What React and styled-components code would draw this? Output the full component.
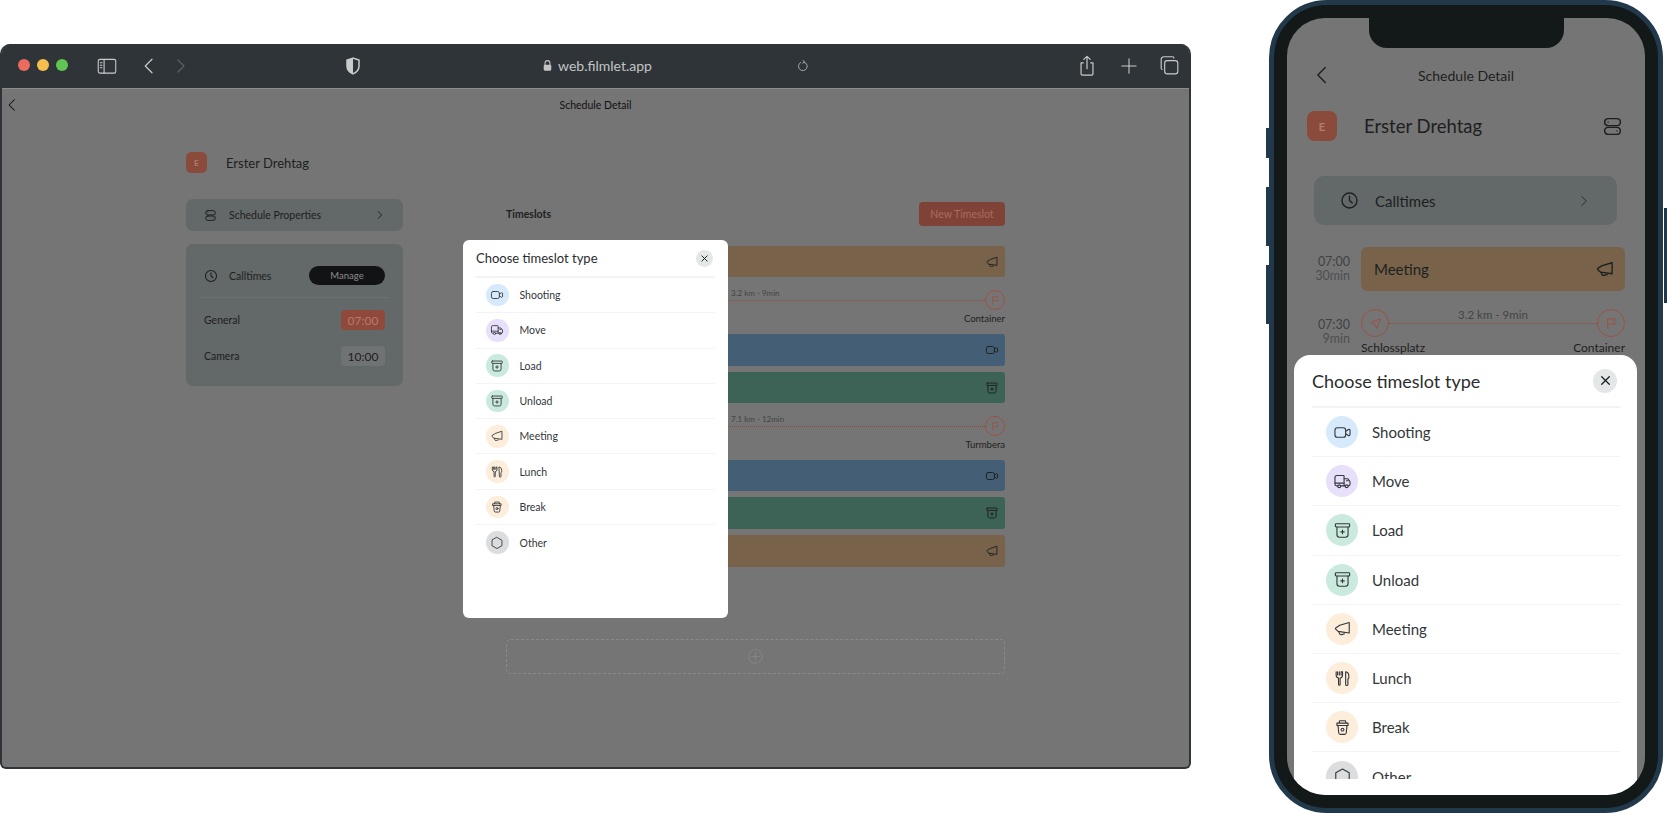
import React from 'react';
import styled, { createGlobalStyle } from 'styled-components';

const GlobalStyle = createGlobalStyle`
    html, body {
        margin: 0;
        background: #fff;
        font-family: "Lato", "Noto Sans", sans-serif;
        color: #1d1f20;
    }
`;

const Page = styled.div`
    display: flex;
    align-items: flex-start;
    width: 1667px;
    height: 813px;
    overflow: hidden;
    background: #fff;
`;

// icons
const Svg = ({ size = 24, stroke = 1.6, color = 'currentColor', children }) => (
    <svg width={size} height={size} viewBox="0 0 24 24" fill="none" stroke={color} strokeWidth={stroke} strokeLinecap="round" strokeLinejoin="round" style={{ display: 'block', flexShrink: 0 }}>
        {children}
    </svg>
);
const VideoIcon = (p) => (
    <Svg {...p}>
        <rect x="2.5" y="6" width="13.5" height="12" rx="3" />
        <path d="M16 10.5l3.4-2.2c.9-.6 2.1 0 2.1 1.1v5.2c0 1.1-1.2 1.7-2.1 1.1L16 13.5" />
    </Svg>
);
const TruckIcon = (p) => (
    <Svg {...p}>
        <path d="M6 17.5H4.5a2 2 0 0 1-2-2V6.5a2 2 0 0 1 2-2H13a1 1 0 0 1 1 1v12H9.5" />
        <path d="M14 8.5h4.5l3 3.5v3.5a2 2 0 0 1-2 2H19M15.5 17.5H14M2.5 14h11.5M17 11h2" />
        <circle cx="7.8" cy="18" r="1.8" />
        <circle cx="17.3" cy="18" r="1.8" />
    </Svg>
);
const BoxIcon = (p) => (
    <Svg {...p}>
        <rect x="3" y="3.5" width="18" height="4" rx="1" />
        <path d="M5 7.5v10a3 3 0 0 0 3 3h8a3 3 0 0 0 3-3v-10" />
        <path d="M12 11.5v4.5M9.8 13.8h4.4" />
    </Svg>
);
const MegaphoneIcon = (p) => (
    <Svg {...p}>
        <path d="M20.5 4.5v13.2L8.5 16H6.8L3.4 12.8a1 1 0 0 1 0-1.5L8.5 8z" />
        <path d="M7.5 16l.6 2.2a2.2 2.2 0 0 0 2.7 1.5l3.7-1" />
    </Svg>
);
const CutleryIcon = (p) => (
    <Svg {...p}>
        <path d="M4 3.5v4.5a3.5 3.5 0 0 0 3 3.4v8.1a1 1 0 0 0 2 0v-8.1a3.5 3.5 0 0 0 3-3.4V3.5l-1.8 0v4M8 3.5v4M5.8 3.5v4" />
        <path d="M16 3.5c2.8.6 4 2.6 4 5.5v2c0 .8-.5 1.5-1.2 1.5v7a1.4 1.4 0 0 1-2.8 0z" />
    </Svg>
);
const CupIcon = (p) => (
    <Svg {...p}>
        <path d="M5 6.5h14v3H5zM7.5 6.5l.8-3h7.4l.8 3" />
        <path d="M6.3 9.5l1 9.5a2 2 0 0 0 2 1.7h5.4a2 2 0 0 0 2-1.7l1-9.5" />
        <circle cx="12" cy="14.7" r="1.8" />
    </Svg>
);
const HexIcon = (p) => (
    <Svg {...p}>
        <path d="M12 2.5l8.5 4.8v9.4L12 21.5l-8.5-4.8V7.300z" />
    </Svg>
);
const FlagIcon = (p) => (
    <Svg {...p}>
        <path d="M7 20V5.500h11l-1.500 4 1.500 4H7" />
    </Svg>
);
const PlaneIcon = (p) => (
    <Svg {...p}>
        <path d="M19.500 4.500L4.500 10.500l6.500 2.500 2.500 6.500z" />
    </Svg>
);
const ClockIcon = (p) => (
    <Svg {...p}>
        <circle cx="12" cy="12" r="9.500" />
        <path d="M12 6.500V12l3.500 3" />
    </Svg>
);
const TogglesIcon = (p) => (
    <Svg {...p}>
        <rect x="3" y="3" width="18" height="8" rx="4" />
        <rect x="3" y="13" width="18" height="8" rx="4" />
        <path d="M7 7h.01M17 17h.01" />
    </Svg>
);
const ChevronLeft = (p) => (
    <Svg {...p}>
        <path d="M16 3L7 12l9 9" />
    </Svg>
);
const ChevronRight = (p) => (
    <Svg {...p}>
        <path d="M8 4l8 8-8 8" />
    </Svg>
);
const CloseIcon = (p) => (
    <Svg {...p}>
        <path d="M5 5l14 14M19 5L5 19" />
    </Svg>
);
const PlusCircle = (p) => (
    <Svg {...p}>
        <circle cx="12" cy="12" r="11" />
        <path d="M12 6v12M6 12h12" />
    </Svg>
);
const SidebarIcon = (p) => (
    <Svg {...p}>
        <rect x="1.500" y="4" width="21" height="16.500" rx="2" />
        <path d="M8.500 4v16.500M4 8h2M4 11h2M4 14h2" />
    </Svg>
);
const ShieldIcon = ({ size }) => (
    <svg width={size} height={size} viewBox="0 0 24 24" style={{ display: 'block' }}>
        <path d="M12 1.500L4 4v8c0 5 3.500 8.500 8 10.500 4.500-2 8-5.500 8-10.500V4z" fill="none" stroke="#c9cccd" strokeWidth="2" />
        <path d="M12 1.500L4 4v8c0 5 3.500 8.500 8 10.500z" fill="#c9cccd" />
    </svg>
);
const LockIcon = ({ size }) => (
    <svg width={size} height={size} viewBox="0 0 24 24" style={{ display: 'block' }}>
        <path d="M7.500 11V7.500a4.500 4.500 0 0 1 9 0V11" fill="none" stroke="#c2c4c5" strokeWidth="2" />
        <rect x="5" y="10.500" width="14" height="11" rx="2" fill="#c2c4c5" />
    </svg>
);
const ReloadIcon = (p) => (
    <Svg {...p}>
        <path d="M14 5.200a7.500 7.500 0 1 1-6 .6M12 2.500l2.500 2.800-3 2" />
    </Svg>
);
const ShareIcon = (p) => (
    <Svg {...p}>
        <path d="M8 8.500H5.500v12a1.500 1.500 0 0 0 1.500 1.500h10a1.500 1.500 0 0 0 1.500-1.500v-12H16M12 15V1.500M8.500 4.800L12 1.500l3.500 3.300" />
    </Svg>
);
const PlusIcon = (p) => (
    <Svg {...p}>
        <path d="M12 2.500v19M2.500 12h19" />
    </Svg>
);
const TabsIcon = (p) => (
    <Svg {...p}>
        <rect x="6.500" y="6.500" width="15" height="15" rx="3" />
        <path d="M3.500 16.500a1.500 1.500 0 0 1-1-1.500V5a3 3 0 0 1 3-3h10a1.500 1.500 0 0 1 1.500 1.500" />
    </Svg>
);

// browser window
const Browser = styled.div`
    position: relative;
    flex-shrink: 0;
    width: 1191px;
    height: 725px;
    margin-top: 44px;
    box-sizing: border-box;
    border: 2px solid #2f3438;
    border-top: 0;
    border-radius: 10px 10px 6px 6px;
    background: #757575;
    overflow: hidden;
`;

const Toolbar = styled.div`
    display: flex;
    align-items: center;
    height: 45px;
    margin: 0 -2px;
    padding-left: 18px;
    padding-bottom: 1px;
    box-sizing: border-box;
    background: #2f3438;
    border-bottom: 1px solid #8b8d8e;
`;

const Lights = styled.div`
    display: flex;
    gap: 7px;
    margin-top: -2px;
`;

const Light = styled.span`
    width: 12px;
    height: 12px;
    border-radius: 50%;
    background: ${(p) => p.$color};
`;

const ToolIcon = styled.span`
    display: block;
    margin-left: ${(p) => p.$left}px;
    color: ${(p) => p.$color || '#c9cccd'};
`;

const Url = styled.span`
    margin-left: 4px;
    font-size: 14px;
    color: #c2c4c5;
`;

const NavBar = styled.div`
    display: grid;
    grid-template-columns: 1fr auto 1fr;
    align-items: center;
    height: 32px;
    padding: 0 5px;
    margin: 0 -2px;
    font-size: 10.500px;
    color: #111;
`;

const DeskColumns = styled.div`
    display: flex;
    margin-top: 31px;
    padding-left: 184px;
`;

const DeskLeft = styled.div`
    display: flex;
    flex-direction: column;
    width: 217px;
`;

const NameRow = styled.div`
    display: flex;
    align-items: center;
    gap: ${(p) => p.$gap}px;
`;

const Badge = styled.div`
    display: flex;
    align-items: center;
    justify-content: center;
    width: ${(p) => p.$size}px;
    height: ${(p) => p.$size}px;
    border-radius: ${(p) => p.$size / 4}px;
    background: #8a4a3c;
    color: #b07a6e;
    font-size: ${(p) => p.$size / 2.500}px;
    font-weight: 700;
`;

const DeskName = styled.div`
    font-size: 13px;
    color: #1d1f20;
`;

const PropsCard = styled.div`
    display: flex;
    align-items: center;
    height: 32px;
    margin-top: 26px;
    padding: 0 18px;
    border-radius: 7px;
    background: #636868;
    font-size: 10.500px;
    color: #1d1f20;
    span { margin-left: 12px; flex: 1; }
`;

const CallCard = styled.div`
    height: 142px;
    margin-top: 13px;
    padding: 22px 18px 0;
    box-sizing: border-box;
    border-radius: 7px;
    background: #636868;
    font-size: 10.500px;
`;

const CallHead = styled.div`
    display: flex;
    align-items: center;
    height: 19px;
    span { margin-left: 11px; flex: 1; }
`;

const ManagePill = styled.div`
    display: flex;
    align-items: center;
    justify-content: center;
    width: 76px;
    height: 19px;
    border-radius: 10px;
    background: #111314;
    color: #8b8d8e;
    font-size: 9.500px;
`;

const CallDivider = styled.div`
    height: 1px;
    margin: 12px -4px 12px -4px;
    background: #6d7171;
`;

const CallRow = styled.div`
    display: flex;
    align-items: center;
    justify-content: space-between;
    height: 20px;
    margin-bottom: 16px;
`;

const TimePill = styled.div`
    display: flex;
    align-items: center;
    justify-content: center;
    width: 44px;
    height: 20px;
    border-radius: 4px;
    font-size: 12px;
    background: ${(p) => (p.$accent ? '#8f4a3c' : '#707373')};
    color: ${(p) => (p.$accent ? '#b8796b' : '#1d1f20')};
`;

const DeskRight = styled.div`
    display: flex;
    flex-direction: column;
    width: 499px;
    margin-left: 103px;
    padding-top: 50px;
`;

const SlotsHead = styled.div`
    display: flex;
    align-items: center;
    justify-content: space-between;
    height: 24px;
    margin-bottom: 20px;
    font-size: 10.500px;
    font-weight: 700;
`;

const NewButton = styled.div`
    display: flex;
    align-items: center;
    justify-content: center;
    width: 86px;
    height: 24px;
    border-radius: 4px;
    background: #7f4237;
    color: #aa6c5f;
    font-size: 10.500px;
    font-weight: 400;
`;

const Slot = styled.div`
    display: flex;
    align-items: center;
    justify-content: flex-end;
    height: ${(p) => p.$height}px;
    margin-bottom: ${(p) => p.$after || 0}px;
    padding-right: 6px;
    box-sizing: border-box;
    border-radius: 3px;
    background: ${(p) => p.$bg};
`;

const DeskRoute = styled.div`
    height: 57px;
    padding-top: 13px;
    box-sizing: border-box;
`;

const RouteLine = styled.div`
    display: flex;
    align-items: center;
`;

const RouteDot = styled.div`
    display: flex;
    align-items: center;
    justify-content: center;
    flex-shrink: 0;
    width: ${(p) => p.$size}px;
    height: ${(p) => p.$size}px;
    box-sizing: border-box;
    border: 1.500px solid #9c5243;
    border-radius: 50%;
    color: #9c5243;
`;

const Dotted = styled.div`
    position: relative;
    flex: 1;
    border-top: 1.500px dotted #8f4a3c;
`;

const DistLabel = styled.span`
    position: absolute;
    bottom: 3px;
    left: ${(p) => (p.$left ? `${p.$left}px` : '50%')};
    transform: ${(p) => (p.$left ? 'none' : 'translateX(-50%)')};
    font-size: ${(p) => p.$size}px;
    color: #444;
    white-space: nowrap;
`;

const PlaceRow = styled.div`
    display: flex;
    justify-content: space-between;
    margin-top: ${(p) => p.$top}px;
    font-size: ${(p) => p.$size}px;
    line-height: 1.200;
    color: #1d1f20;
`;

const AddBox = styled.div`
    display: flex;
    align-items: center;
    justify-content: center;
    height: 35px;
    margin-top: 72px;
    box-sizing: border-box;
    border: 1px dashed #8a8a8a;
    border-radius: 5px;
    color: #8a8a8a;
`;

// type picker
const DeskModal = styled.div`
    position: absolute;
    left: 461px;
    top: 196px;
    width: 265px;
    height: 378px;
    padding: 0 13px;
    box-sizing: border-box;
    border-radius: 6px;
    background: #fff;
`;

const SheetHead = styled.div`
    display: flex;
    align-items: center;
    justify-content: space-between;
    height: ${(p) => p.$height}px;
    box-sizing: border-box;
    font-size: ${(p) => p.$size}px;
    color: #2a2d2e;
    border-bottom: 2px solid #f2f3f3;
`;

const CloseBtn = styled.div`
    display: flex;
    align-items: center;
    justify-content: center;
    width: ${(p) => p.$size}px;
    height: ${(p) => p.$size}px;
    margin-right: ${(p) => p.$right}px;
    border-radius: 50%;
    background: #e3e7e8;
    color: #1d1f20;
`;

const TypeRow = styled.div`
    display: flex;
    align-items: center;
    gap: ${(p) => p.$gap}px;
    height: ${(p) => p.$height}px;
    padding-left: ${(p) => p.$pad}px;
    box-sizing: border-box;
    border-bottom: 1px solid #f3f4f4;
    font-size: ${(p) => p.$size}px;
    color: #33373a;
    flex-shrink: 0;
    &:last-child { border-bottom: 0; }
`;

const TypeCircle = styled.div`
    display: flex;
    align-items: center;
    justify-content: center;
    width: ${(p) => p.$size}px;
    height: ${(p) => p.$size}px;
    border-radius: 50%;
    background: ${(p) => p.$bg};
    color: #33373a;
`;

// phone
const Phone = styled.div`
    position: relative;
    flex-shrink: 0;
    width: 394px;
    height: 813px;
    margin-left: 78px;
    padding: 13px;
    box-sizing: border-box;
    border: 5px solid #21394a;
    border-radius: 58px;
    background: #131818;
`;

const SideKey = styled.span`
    position: absolute;
    top: ${(p) => p.$top - 5}px;
    ${(p) => (p.$right ? 'right: -9px;' : 'left: -8px;')}
    width: 3px;
    height: ${(p) => p.$height}px;
    background: #21394a;
`;

const Screen = styled.div`
    position: relative;
    height: 100%;
    overflow: hidden;
    border-radius: 38px;
    background: #757575;
`;

const Notch = styled.div`
    position: absolute;
    top: 0;
    left: 82px;
    width: 195px;
    height: 30px;
    border-radius: 0 0 18px 18px;
    background: #131818;
`;

const PhoneNav = styled.div`
    display: grid;
    grid-template-columns: 1fr auto 1fr;
    align-items: center;
    height: 20px;
    margin-top: 47px;
    padding-left: 25px;
    padding-right: 25px;
    font-size: 14px;
    color: #1d1f20;
`;

const PhoneHead = styled.div`
    display: flex;
    align-items: center;
    justify-content: space-between;
    margin-top: 26px;
    padding: 0 22px 0 20px;
`;

const PhoneName = styled.div`
    font-size: 18.500px;
    color: #1d1f20;
`;

const PhoneCard = styled.div`
    display: flex;
    align-items: center;
    height: 49px;
    margin: 35px 28px 0 27px;
    padding: 0 26px;
    border-radius: 10px;
    background: #636868;
    font-size: 15px;
    span { margin-left: 16px; flex: 1; }
`;

const Timeline = styled.div`
    display: grid;
    grid-template-columns: 63px 264px;
    column-gap: 11px;
    margin-top: 22px;
    row-gap: 18px;
    align-items: center;
`;

const TimeCell = styled.div`
    text-align: right;
    font-size: 12.500px;
    line-height: 14px;
    color: #3f4243;
    small { display: block; font-size: 12.500px; color: #4c4f50; }
`;

const PhoneSlot = styled.div`
    display: flex;
    align-items: center;
    justify-content: space-between;
    height: 44px;
    padding: 0 10px 0 13px;
    border-radius: 6px;
    background: #78634a;
    font-size: 15px;
    color: #1d1f20;
`;

const Sheet = styled.div`
    position: absolute;
    left: 7px;
    right: 8px;
    top: 337px;
    bottom: 0;
    padding: 0 17px 16px 18px;
    box-sizing: border-box;
    display: flex;
    flex-direction: column;
    border-radius: 16px 16px 0 0;
    background: #fff;
`;

const SheetList = styled.div`
    display: flex;
    flex-direction: column;
    flex: 1;
    min-height: 0;
    overflow: hidden;
`;

const TYPES = [
    { name: 'Shooting', Icon: VideoIcon, bg: '#d6eafc' },
    { name: 'Move', Icon: TruckIcon, bg: '#e8e0fb' },
    { name: 'Load', Icon: BoxIcon, bg: '#cbeade' },
    { name: 'Unload', Icon: BoxIcon, bg: '#cbeade' },
    { name: 'Meeting', Icon: MegaphoneIcon, bg: '#fdeedb' },
    { name: 'Lunch', Icon: CutleryIcon, bg: '#fdeedb' },
    { name: 'Break', Icon: CupIcon, bg: '#fdeedb' },
    { name: 'Other', Icon: HexIcon, bg: '#dcdddf' },
];

const TypeList = ({ rowH, pad, gap, circle, icon, font, stroke }) => TYPES.map(({ name, Icon, bg }) => (
    <TypeRow key={name} $height={rowH} $pad={pad} $gap={gap} $size={font}>
        <TypeCircle $size={circle} $bg={bg}><Icon size={icon} stroke={stroke} /></TypeCircle>
        {name}
    </TypeRow>
));

const DeskRouteRow = ({ dist, to }) => (
    <DeskRoute>
        <RouteLine>
            <RouteDot $size={20}><PlaneIcon size={11} stroke={1.6} /></RouteDot>
            <Dotted><DistLabel $size={8} $left={205}>{dist}</DistLabel></Dotted>
            <RouteDot $size={20}><FlagIcon size={12} stroke={1.6} /></RouteDot>
        </RouteLine>
        <PlaceRow $top={3} $size={9.5}><span />{to}</PlaceRow>
    </DeskRoute>
);

const App = () => {
    return (
        <Page>
            <GlobalStyle />
            <Browser>
                <Toolbar>
                    <Lights>
                        <Light $color="#ec6a5e" />
                        <Light $color="#f4bf4f" />
                        <Light $color="#61c554" />
                    </Lights>
                    <ToolIcon $left={29}><SidebarIcon size={20} stroke={1.3} /></ToolIcon>
                    <ToolIcon $left={23}><ChevronLeft size={18} stroke={1.6} /></ToolIcon>
                    <ToolIcon $left={14} $color="#5b6064"><ChevronRight size={18} stroke={1.6} /></ToolIcon>
                    <ToolIcon $left={154}><ShieldIcon size={18} /></ToolIcon>
                    <ToolIcon $left={179}><LockIcon size={13} /></ToolIcon>
                    <Url>web.filmlet.app</Url>
                    <ToolIcon $left={144}><ReloadIcon size={14} stroke={1.3} /></ToolIcon>
                    <ToolIcon $left={266}><ShareIcon size={22} stroke={1.3} /></ToolIcon>
                    <ToolIcon $left={22}><PlusIcon size={18} stroke={1.4} /></ToolIcon>
                    <ToolIcon $left={21}><TabsIcon size={21} stroke={1.3} /></ToolIcon>
                </Toolbar>
                <NavBar>
                    <ChevronLeft size={14} stroke={1.8} />
                    <span>Schedule Detail</span>
                </NavBar>
                <DeskColumns>
                    <DeskLeft>
                        <NameRow $gap={19}>
                            <Badge $size={21}>E</Badge>
                            <DeskName>Erster Drehtag</DeskName>
                        </NameRow>
                        <PropsCard>
                            <TogglesIcon size={13} stroke={1.8} />
                            <span>Schedule Properties</span>
                            <ChevronRight size={10} stroke={2.2} />
                        </PropsCard>
                        <CallCard>
                            <CallHead>
                                <ClockIcon size={14} stroke={1.8} />
                                <span>Calltimes</span>
                                <ManagePill>Manage</ManagePill>
                            </CallHead>
                            <CallDivider />
                            <CallRow>General<TimePill $accent>07:00</TimePill></CallRow>
                            <CallRow>Camera<TimePill>10:00</TimePill></CallRow>
                        </CallCard>
                    </DeskLeft>
                    <DeskRight>
                        <SlotsHead>
                            Timeslots
                            <NewButton>New Timeslot</NewButton>
                        </SlotsHead>
                        <Slot $height={31} $bg="#78634a"><MegaphoneIcon size={14} /></Slot>
                        <DeskRouteRow dist="3.2 km - 9min" to="Container" />
                        <Slot $height={32} $after={6} $bg="#445e75"><VideoIcon size={14} /></Slot>
                        <Slot $height={31} $bg="#3c6356"><BoxIcon size={14} /></Slot>
                        <DeskRouteRow dist="7.1 km - 12min" to="Turmbera" />
                        <Slot $height={31} $after={6} $bg="#445e75"><VideoIcon size={14} /></Slot>
                        <Slot $height={32} $after={6} $bg="#3c6356"><BoxIcon size={14} /></Slot>
                        <Slot $height={32} $bg="#78634a"><MegaphoneIcon size={14} /></Slot>
                        <AddBox><PlusCircle size={15} stroke={1.2} /></AddBox>
                    </DeskRight>
                </DeskColumns>
                <DeskModal>
                    <SheetHead $height={38} $size={13}>
                        Choose timeslot type
                        <CloseBtn $size={17} $right={2}><CloseIcon size={9} stroke={2.6} /></CloseBtn>
                    </SheetHead>
                    <TypeList rowH={35.3} pad={10} gap={11} circle={22.5} icon={14} font={10.5} stroke={1.5} />
                </DeskModal>
            </Browser>

            <Phone>
                <SideKey $top={128} $height={30} />
                <SideKey $top={187} $height={59} />
                <SideKey $top={265} $height={59} />
                <SideKey $right $top={208} $height={95} />
                <Screen>
                    <Notch />
                    <PhoneNav>
                        <ChevronLeft size={20} stroke={1.7} />
                        <span>Schedule Detail</span>
                    </PhoneNav>
                    <PhoneHead>
                        <NameRow $gap={27}>
                            <Badge $size={30}>E</Badge>
                            <PhoneName>Erster Drehtag</PhoneName>
                        </NameRow>
                        <TogglesIcon size={21} stroke={1.7} />
                    </PhoneHead>
                    <PhoneCard>
                        <ClockIcon size={19} stroke={1.7} />
                        <span>Calltimes</span>
                        <ChevronRight size={14} stroke={1.3} />
                    </PhoneCard>
                    <Timeline>
                        <TimeCell>07:00<small>30min</small></TimeCell>
                        <PhoneSlot>Meeting<MegaphoneIcon size={20} stroke={1.6} /></PhoneSlot>
                        <TimeCell>07:30<small>9min</small></TimeCell>
                        <div>
                            <RouteLine>
                                <RouteDot $size={28}><PlaneIcon size={15} stroke={1.6} /></RouteDot>
                                <Dotted><DistLabel $size={11.5}>3.2 km - 9min</DistLabel></Dotted>
                                <RouteDot $size={28}><FlagIcon size={16} stroke={1.6} /></RouteDot>
                            </RouteLine>
                            <PlaceRow $top={4} $size={12}><span>Schlossplatz</span><span>Container</span></PlaceRow>
                        </div>
                    </Timeline>
                    <Sheet>
                        <SheetHead $height={53} $size={18}>
                            Choose timeslot type
                            <CloseBtn $size={24} $right={3}><CloseIcon size={13} stroke={2.4} /></CloseBtn>
                        </SheetHead>
                        <SheetList>
                            <TypeList rowH={49.2} pad={14} gap={14} circle={32} icon={19} font={15} stroke={1.4} />
                        </SheetList>
                    </Sheet>
                </Screen>
            </Phone>
        </Page>
    );
};

export default App;
